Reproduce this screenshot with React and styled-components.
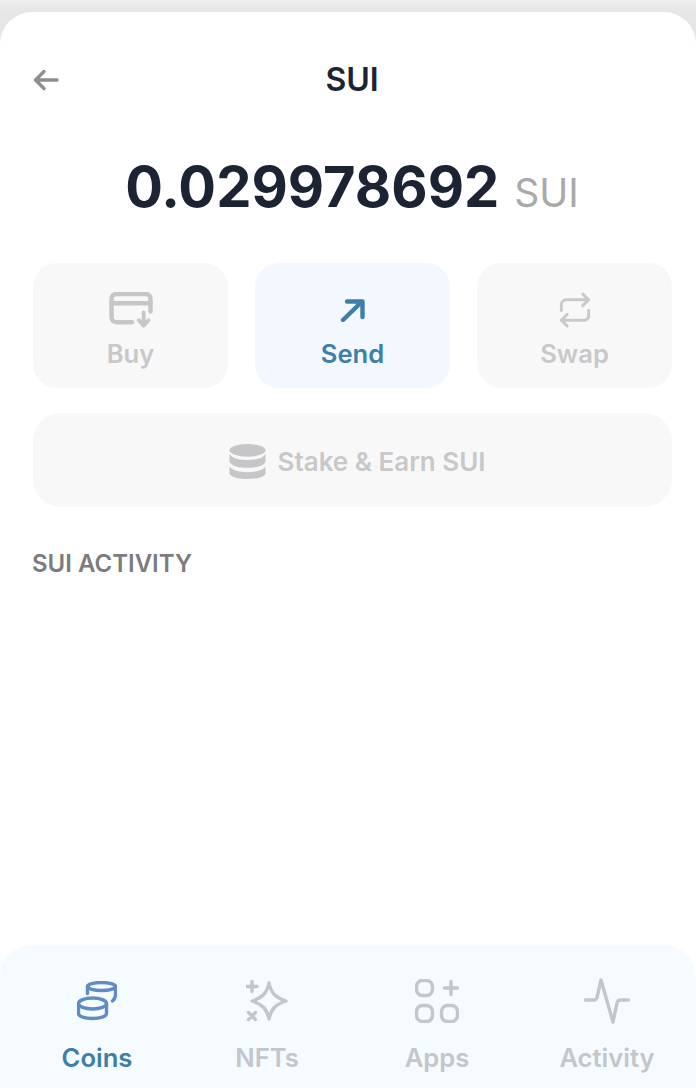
import styled, { createGlobalStyle } from "styled-components";

const GlobalStyle = createGlobalStyle`
  html, body {
    margin: 0;
    padding: 0;
    background: #e9e9e9;
    font-family: "Inter", "Liberation Sans", sans-serif;
  }
  * { box-sizing: border-box; }
`;

function BackIcon() {
  return (
    <svg width="28" height="24" viewBox="0 0 28 24" fill="none" stroke="#8d8d8f" strokeWidth="3.400" strokeLinecap="round" strokeLinejoin="round">
      <path d="M25 12H3.5M12 3.5L3.5 12L12 20.5" />
    </svg>
  );
}

function BuyIcon() {
  return (
    <svg width="46" height="37" viewBox="0 0 46 38" fill="none" stroke="#c6c6c8" strokeWidth="4.600" strokeLinecap="round" strokeLinejoin="round">
      <path d="M24 31H8a5 5 0 0 1-5-5V7a5 5 0 0 1 5-5h30a5 5 0 0 1 5 5v13" />
      <path d="M3 11.5H43" />
      <path d="M36 21v13M31 29l5 5.5 5-5.5" strokeWidth="4" />
    </svg>
  );
}

function SendIcon() {
  return (
    <svg width="26" height="24" viewBox="0 0 26 24" fill="none" stroke="#3d7fa8" strokeWidth="4.400" strokeLinecap="round" strokeLinejoin="round">
      <path d="M3 22L22 3.5M7 3.5H22.5V19" />
    </svg>
  );
}

function SwapIcon() {
  return (
    <svg width="32" height="37" viewBox="0 0 32 38" fill="none" stroke="#c9c9cb" strokeWidth="3" strokeLinecap="round" strokeLinejoin="round">
      <path d="M30 8H7a5 5 0 0 0-5 5v6" />
      <path d="M24 2l6 6-6 6" />
      <path d="M2 29h24a5 5 0 0 0 4-5v-5" />
      <path d="M8 23l-6 6 6 6" />
    </svg>
  );
}

function StakeIcon() {
  return (
    <svg width="37" height="35" viewBox="0 0 38 36" fill="#c6c6c8">
      <ellipse cx="19" cy="6.5" rx="18.500" ry="6.500" />
      <path d="M0.500 10c2 4.500 9.500 6.500 18.500 6.500S35.500 14.500 37.500 10v8c-1.500 4.500-9 6.500-18.500 6.500S2 22.500 0.500 18z" />
      <path d="M0.500 23c2 4 9.500 6 18.500 6s16.500-2 18.500-6v7.500c-1.500 3.500-9 5.500-18.500 5.500S2 34 0.500 30.500z" />
    </svg>
  );
}

function CoinsIcon() {
  return (
    <svg width="40" height="40" viewBox="0 0 40 40" fill="none" stroke="#5f8cc7" strokeWidth="3.400" strokeLinecap="round" strokeLinejoin="round">
      <ellipse cx="24.500" cy="5.500" rx="14" ry="4" />
      <path d="M10.500 5.500v7M38.500 5.500v8c0 3-1 5-3 6.500" />
      <ellipse cx="15.500" cy="22.500" rx="14" ry="5.500" />
      <path d="M1.500 22.500v10c0 3 6.500 5 14 5s14-2 14-5v-10" />
    </svg>
  );
}

function NftsIcon() {
  return (
    <svg width="42" height="42" viewBox="0 0 42 42" fill="none" stroke="#c3c6cb" strokeWidth="3.400" strokeLinecap="round" strokeLinejoin="round">
      <path d="M23 3c2 9.500 6 14.500 17 18-11 3.500-15 8.500-17 18-2-9.500-6-14.500-17-18 11-3.500 15-8.500 17-18z" />
      <path d="M6 1.500v10M1 6.500h10" />
      <path d="M2.500 32.500l7 7M9.500 32.500l-7 7" />
    </svg>
  );
}

function AppsIcon() {
  return (
    <svg width="44" height="44" viewBox="0 0 44 44" fill="none" stroke="#c3c6cb" strokeWidth="3.400" strokeLinecap="round" strokeLinejoin="round">
      <rect x="1.500" y="1.500" width="16" height="15" rx="6" />
      <rect x="1.500" y="26.500" width="16" height="16" rx="6" />
      <rect x="26.500" y="26.500" width="16" height="16" rx="6" />
      <path d="M36 2.500v13M29.500 9h13" />
    </svg>
  );
}

function ActivityIcon() {
  return (
    <svg width="46" height="46" viewBox="0 0 46 46" fill="none" stroke="#c3c6cb" strokeWidth="3.400" strokeLinecap="round" strokeLinejoin="round">
      <path d="M1.500 22H10c1.500 0 2.500-1 3-2.500L17 2l12 42 4-19c.5-2 1.500-3 3.500-3h8" />
    </svg>
  );
}

export default function App() {
  return (
    <Styled.Page>
      <GlobalStyle />
      <Styled.Card>
        <Styled.Header>
          <Styled.Back><BackIcon /></Styled.Back>
          <Styled.Title>SUI</Styled.Title>
        </Styled.Header>

        <Styled.Balance>
          <Styled.Amount>0.029978692</Styled.Amount>
          <Styled.Unit>SUI</Styled.Unit>
        </Styled.Balance>

        <Styled.Actions>
          <Styled.Action>
            <Styled.ActionIcon><BuyIcon /></Styled.ActionIcon>
            <Styled.ActionLabel>Buy</Styled.ActionLabel>
          </Styled.Action>
          <Styled.Action $active>
            <Styled.ActionIcon><SendIcon /></Styled.ActionIcon>
            <Styled.ActionLabel $active>Send</Styled.ActionLabel>
          </Styled.Action>
          <Styled.Action>
            <Styled.ActionIcon><SwapIcon /></Styled.ActionIcon>
            <Styled.ActionLabel>Swap</Styled.ActionLabel>
          </Styled.Action>
        </Styled.Actions>

        <Styled.Stake>
          <StakeIcon />
          <span>Stake &amp; Earn SUI</span>
        </Styled.Stake>

        <Styled.SectionTitle>SUI ACTIVITY</Styled.SectionTitle>

        <Styled.Nav>
          <Styled.NavItem>
            <Styled.NavIcon><CoinsIcon /></Styled.NavIcon>
            <Styled.NavLabel $active>Coins</Styled.NavLabel>
          </Styled.NavItem>
          <Styled.NavItem>
            <Styled.NavIcon><NftsIcon /></Styled.NavIcon>
            <Styled.NavLabel>NFTs</Styled.NavLabel>
          </Styled.NavItem>
          <Styled.NavItem>
            <Styled.NavIcon><AppsIcon /></Styled.NavIcon>
            <Styled.NavLabel>Apps</Styled.NavLabel>
          </Styled.NavItem>
          <Styled.NavItem>
            <Styled.NavIcon><ActivityIcon /></Styled.NavIcon>
            <Styled.NavLabel>Activity</Styled.NavLabel>
          </Styled.NavItem>
        </Styled.Nav>
      </Styled.Card>
    </Styled.Page>
  );
}

const Styled = {
  Page: styled.div`
    height: 1088px;
    padding-top: 12px;
    background: linear-gradient(#eeeeee, #e6e6e6 12px);
    overflow: hidden;
  `,

  Card: styled.div`
    height: 1076px;
    display: flex;
    flex-direction: column;
    background: #ffffff;
    border-radius: 32px 32px 0 0;
  `,

  Header: styled.div`
    position: relative;
    height: 134px;
    padding: 2px 0 0 8px;
    display: flex;
    align-items: center;
    justify-content: center;
  `,

  Back: styled.div`
    position: absolute;
    left: 32px;
    top: 56px;
    display: flex;
  `,

  Title: styled.h1`
    margin: 0;
    font-size: 32px;
    font-weight: 600;
    line-height: 36px;
    color: #1c2433;
  `,

  Balance: styled.div`
    height: 117px;
    display: flex;
    align-items: baseline;
    justify-content: center;
    gap: 15px;
    padding: 7px 0 0 8px;
  `,

  Amount: styled.span`
    font-size: 56px;
    line-height: 68px;
    font-weight: 700;
    color: #1c2433;
  `,

  Unit: styled.span`
    font-size: 39px;
    font-weight: 400;
    color: #a9a9ab;
  `,

  Actions: styled.div`
    display: grid;
    grid-template-columns: repeat(3, 195px);
    justify-content: space-between;
    padding: 0 24px 0 33px;
  `,

  Action: styled.div`
    height: 125px;
    display: flex;
    flex-direction: column;
    align-items: center;
    border-radius: 24px;
    padding-top: 25px;
    background: ${({ $active }) => ($active ? "#f2f8fe" : "#f8f8f9")};
  `,

  ActionIcon: styled.div`
    height: 46px;
    display: flex;
    align-items: center;
    justify-content: center;
    margin-top: -1px;
  `,

  ActionLabel: styled.div`
    margin-top: 6px;
    font-size: 25.6px;
    line-height: 30px;
    font-weight: 600;
    color: ${({ $active }) => ($active ? "#3d7fa8" : "#c8c8ca")};
  `,

  Stake: styled.div`
    height: 94px;
    margin: 25px 24px 0 33px;
    padding: 3px 0 0 10px;
    display: flex;
    align-items: center;
    justify-content: center;
    gap: 11px;
    border-radius: 28px;
    background: #f8f8f9;
    font-size: 26px;
    font-weight: 600;
    color: #c8c8ca;
  `,

  SectionTitle: styled.h2`
    margin: 42px 0 0 32px;
    font-size: 24px;
    line-height: 30px;
    font-weight: 600;
    color: #7c7c7e;
  `,

  Nav: styled.nav`
    margin-top: auto;
    height: 143px;
    padding: 31px 4px 0 12px;
    display: grid;
    grid-template-columns: repeat(4, 170px);
    background: #f6fbff;
    border-radius: 32px 32px 0 0;
  `,

  NavItem: styled.div`
    display: flex;
    flex-direction: column;
    align-items: center;
    gap: 17px;
  `,

  NavIcon: styled.div`
    height: 50px;
    display: flex;
    align-items: center;
    justify-content: center;
  `,

  NavLabel: styled.div`
    font-size: 25.6px;
    line-height: 30px;
    font-weight: 600;
    color: ${({ $active }) => ($active ? "#3d7fa8" : "#c3c6cb")};
  `,
};
